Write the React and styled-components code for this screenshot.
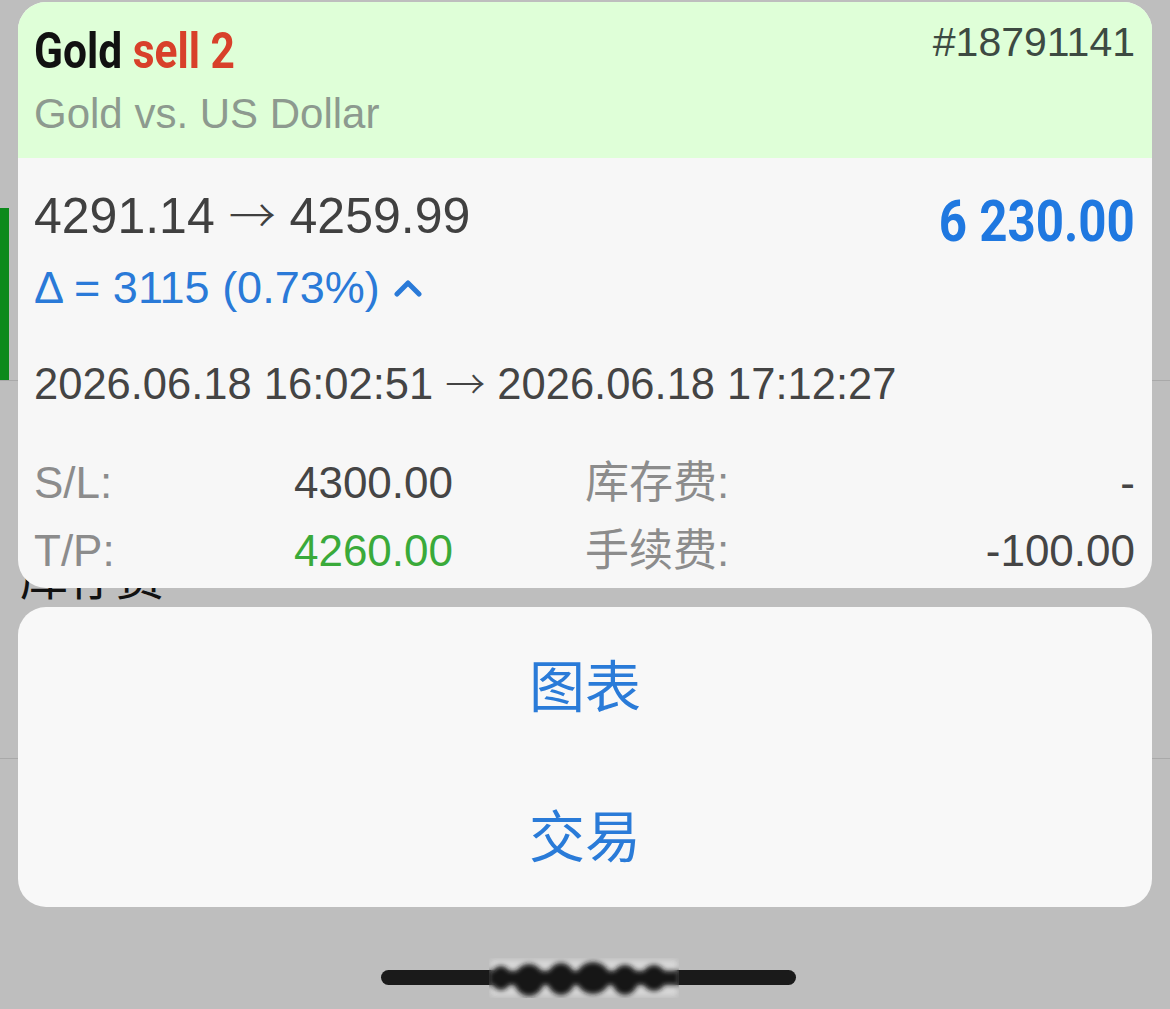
import styled, { createGlobalStyle } from "styled-components";

const Global = createGlobalStyle`
  html, body {
    margin: 0;
    padding: 0;
    background: #bebebe;
  }
  body {
    font-family: "Liberation Sans", "Noto Sans CJK SC", sans-serif;
  }
`;

const Page = styled.div`
  position: relative;
  width: 1170px;
  height: 1009px;
  overflow: hidden;
  background: #bebebe;
`;

/* dimmed app page behind the sheet */
const BgRow = styled.div`
  display: flex;
  height: ${(p) => p.h}px;
  border-bottom: 1px solid #a9a9a9;
  box-sizing: border-box;
`;

const GreenBar = styled.div`
  align-self: flex-end;
  width: 9px;
  height: 172px;
  background: #0d8a1c;
`;

const BgText = styled.div`
  margin: 170px 0 0 20px;
  font-size: 48px;
  line-height: 56px;
  color: #111;
`;

/* overlay */
const Overlay = styled.div`
  position: absolute;
  inset: 0;
  display: flex;
  flex-direction: column;
  padding: 2px 18px 0;
`;

const Card = styled.div`
  border-radius: 28px;
  overflow: hidden;
  background: #f7f7f7;
`;

const Header = styled.div`
  height: 156px;
  box-sizing: border-box;
  padding: 16px 17px 0 16px;
  background: #dfffd8;
`;

const TopRow = styled.div`
  display: flex;
  justify-content: space-between;
  align-items: flex-start;
`;

const Title = styled.div`
  margin-top: 5px;
  font-family: Roboto, "Liberation Sans", sans-serif;
  font-weight: 700;
  font-size: 50px;
  line-height: 56px;
  color: #111;
  transform: scaleX(0.85);
  transform-origin: left center;
  white-space: nowrap;
`;

const Sell = styled.span`
  color: #d8402a;
`;

const OrderNo = styled.div`
  font-size: 41px;
  line-height: 48px;
  color: #3d4a42;
`;

const Subtitle = styled.div`
  margin-top: 11px;
  font-size: 42px;
  line-height: 48px;
  color: #8d9a8f;
`;

const Body = styled.div`
  padding: 30px 17px 3px 16px;
`;

const PriceRow = styled.div`
  display: flex;
  justify-content: space-between;
  align-items: flex-start;
`;

const Prices = styled.div`
  font-size: 50px;
  line-height: 56px;
  color: #404040;
  white-space: nowrap;
`;

const Arrow = styled.span`
  font-family: "Noto Sans CJK SC", sans-serif;
  font-weight: 300;
  font-size: ${(p) => p.size}px;
  line-height: 1;
`;

const Amount = styled.div`
  margin-top: 5px;
  font-family: Roboto, "Liberation Sans", sans-serif;
  font-weight: 700;
  font-size: 58px;
  line-height: 56px;
  color: #1f78e0;
  transform: scaleX(0.85);
  transform-origin: right center;
  white-space: nowrap;
`;

const Delta = styled.div`
  display: flex;
  align-items: center;
  gap: 14px;
  margin-top: 14px;
  font-size: 45px;
  line-height: 50px;
  color: #2a7ad8;
`;

const DateLine = styled.div`
  margin-top: 47px;
  font-size: 43.5px;
  line-height: 48px;
  color: #444;
  white-space: nowrap;
`;

const Grid = styled.div`
  display: grid;
  grid-template-columns: 160px 259px 132px auto 1fr;
  grid-auto-rows: 68px;
  margin-top: 41px;
  font-size: 44px;
  line-height: 68px;
`;

const Label = styled.div`
  grid-column: ${(p) => p.col || "auto"};
  color: #8c8c8c;
  white-space: nowrap;
`;

const Value = styled.div`
  text-align: right;
  color: ${(p) => p.color || "#454545"};
`;

const Sheet = styled.div`
  margin-top: 19px;
  border-radius: 28px;
  background: #f8f8f8;
  display: flex;
  flex-direction: column;
`;

const SheetButton = styled.div`
  height: 150px;
  display: flex;
  align-items: center;
  justify-content: center;
  font-family: "Noto Sans CJK SC", sans-serif;
  font-size: 56px;
  color: #2a7bd8;
`;

const HomeWrap = styled.div`
  position: relative;
  align-self: center;
  margin-top: 63px;
  margin-left: 6px;
  width: 415px;
  height: 15px;
`;

const HomeBar = styled.div`
  width: 100%;
  height: 100%;
  border-radius: 8px;
  background: #1a1a1a;
`;

const Smudge = styled.svg`
  position: absolute;
  left: 108px;
  top: -12px;
`;

function Chevron() {
  return (
    <svg width="28" height="18" viewBox="0 0 28 18">
      <polyline
        points="3,15 14,4 25,15"
        fill="none"
        stroke="#2a7ad8"
        strokeWidth="5"
        strokeLinecap="round"
        strokeLinejoin="round"
      />
    </svg>
  );
}

const rows = [
  { label: "S/L:", value: "4300.00", label2: "库存费:", value2: "-" },
  { label: "T/P:", value: "4260.00", color: "#3aaa3a", label2: "手续费:", value2: "-100.00" },
];

export default function App() {
  return (
    <Page>
      <Global />
      <BgRow h={381}>
        <GreenBar />
      </BgRow>
      <BgRow h={378}>
        <BgText>库存费</BgText>
      </BgRow>

      <Overlay>
        <Card>
          <Header>
            <TopRow>
              <Title>
                Gold <Sell>sell 2</Sell>
              </Title>
              <OrderNo>#18791141</OrderNo>
            </TopRow>
            <Subtitle>Gold vs. US Dollar</Subtitle>
          </Header>
          <Body>
            <PriceRow>
              <Prices>
                4291.14 <Arrow size={47}>→</Arrow> 4259.99
              </Prices>
              <Amount>6 230.00</Amount>
            </PriceRow>
            <Delta>
              <span>Δ = 3115 (0.73%)</span>
              <Chevron />
            </Delta>
            <DateLine>
              2026.06.18 16:02:51 <Arrow size={40}>→</Arrow> 2026.06.18 17:12:27
            </DateLine>
            <Grid>
              {rows.map((r) => [
                <Label key={r.label}>{r.label}</Label>,
                <Value key={r.label + "v"} color={r.color}>{r.value}</Value>,
                <Label key={r.label2} col={4}>{r.label2}</Label>,
                <Value key={r.label2 + "v"}>{r.value2}</Value>,
              ])}
            </Grid>
          </Body>
        </Card>

        <Sheet>
          <SheetButton>图表</SheetButton>
          <SheetButton>交易</SheetButton>
        </Sheet>

        <HomeWrap>
          <HomeBar />
          <Smudge width="190" height="40" viewBox="0 0 190 40">
            <defs>
              <filter id="b" x="-20%" y="-50%" width="140%" height="200%">
                <feGaussianBlur stdDeviation="2.5" />
              </filter>
            </defs>
            <rect x="2" y="2" width="186" height="36" fill="#dadada" filter="url(#b)" opacity="0.9" />
            <g fill="#161616" filter="url(#b)">
              <ellipse cx="12" cy="20" rx="10" ry="12" />
              <ellipse cx="40" cy="22" rx="15" ry="16" />
              <ellipse cx="72" cy="21" rx="14" ry="16" />
              <ellipse cx="104" cy="20" rx="17" ry="16" />
              <ellipse cx="136" cy="22" rx="13" ry="15" />
              <ellipse cx="165" cy="20" rx="12" ry="13" />
              <rect x="0" y="13" width="190" height="14" />
            </g>
          </Smudge>
        </HomeWrap>
      </Overlay>
    </Page>
  );
}
